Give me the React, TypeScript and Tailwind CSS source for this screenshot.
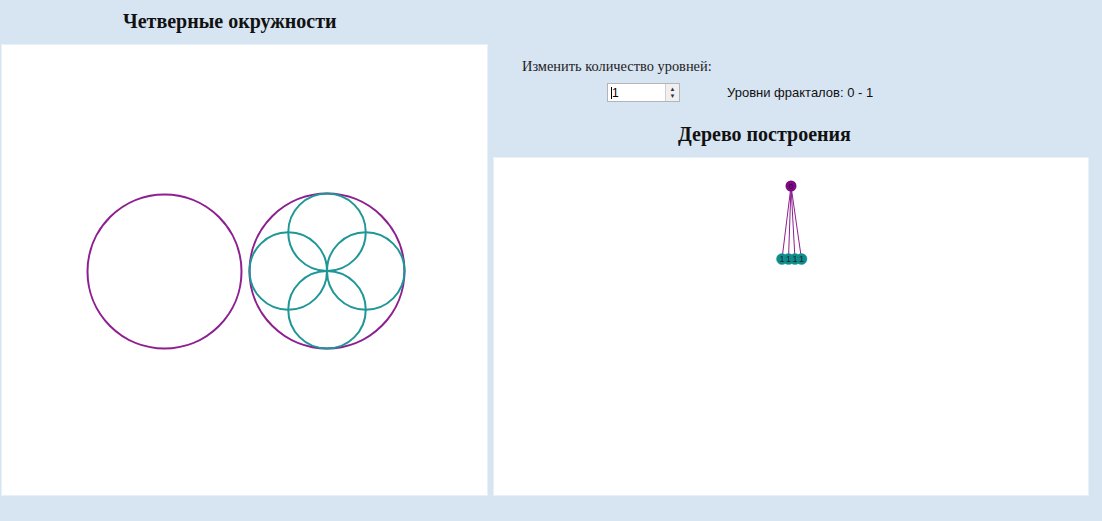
export default function App() {
  const purple = "#8d1f91";
  const teal = "#1f9697";

  // four inner circles of the quad fractal
  const cx = 325;
  const cy = 226;
  const R = 77.5;
  const r = R / 2;
  const inner = [
    [cx, cy - r],
    [cx, cy + r],
    [cx - r, cy],
    [cx + r, cy],
  ];

  const children = [288, 294.5, 301, 307.5];

  return (
    <div className="w-[1102px] h-[521px] bg-[#d7e4f2] flex pl-[1px] gap-[5px] overflow-hidden">
      {/* LEFT COLUMN */}
      <div className="w-[487px] flex flex-col">
        <div className="h-[44px] pl-[122px] pt-[8px] font-['Liberation_Serif',serif] font-bold text-[20px] leading-[26px] text-[#111]">
          Четверные окружности
        </div>
        <div className="h-[452px] bg-white border border-[#e8f0f9]">
          <svg width="485" height="450" viewBox="0 0 485 450">
            <circle cx={162.5} cy={226.5} r={77} fill="none" stroke={purple} strokeWidth={2} />
            <circle cx={cx} cy={cy} r={R} fill="none" stroke={purple} strokeWidth={2} />
            {inner.map(([x, y], i) => (
              <circle key={i} cx={x} cy={y} r={r} fill="none" stroke={teal} strokeWidth={2} />
            ))}
          </svg>
        </div>
      </div>

      {/* RIGHT COLUMN */}
      <div className="w-[596px] flex flex-col">
        <div className="h-[113px] pt-[57px] pl-[29px] font-['Liberation_Serif',serif] text-[14.4px] leading-[18px] text-[#222]">
          Изменить количество уровней:
          <div className="flex items-center mt-[8px]">
            <div className="ml-[85px] w-[73px] h-[19px] border border-[#b5b5b5] bg-white flex items-center">
              <span className="ml-[3px] h-[12px] border-l border-black"></span>
              <span className="font-['Liberation_Sans',sans-serif] text-[12px] leading-[14px] text-black">1</span>
              <div className="ml-auto w-[14px] h-full border-l border-[#d0d0d0] bg-[#f0f0f0] flex flex-col items-center justify-center text-[6px] leading-[7px] text-[#333]">
                <span>▲</span>
                <span>▼</span>
              </div>
            </div>
            <span className="ml-[47px] font-['Liberation_Sans',sans-serif] text-[13px] leading-[16px] text-[#111]">
              Уровни фракталов: 0 - 1
            </span>
          </div>
        </div>
        <div className="h-[44px] pl-[185px] pt-[8px] font-['Liberation_Serif',serif] font-bold text-[20px] leading-[26px] text-[#111]">
          Дерево построения
        </div>
        <div className="h-[339px] bg-white border border-[#e8f0f9]">
          <svg width="594" height="337" viewBox="0 0 594 337">
            {children.map((x, i) => (
              <line key={i} x1={297} y1={28} x2={x} y2={101} stroke={purple} strokeWidth={1} />
            ))}
            {children.map((x, i) => (
              <circle key={i} cx={x} cy={101} r={5.5} fill="#108a8a" stroke="#17a0a0" strokeWidth={0.5} />
            ))}
            {children.map((x, i) => (
              <text
                key={i}
                x={x}
                y={104}
                textAnchor="middle"
                fontSize={9}
                fontFamily="Liberation Sans, sans-serif"
                fill="#0a2a2a"
              >
                1
              </text>
            ))}
            <circle cx={297} cy={28} r={5.5} fill="#7d0a82" />
            <text x={297} y={31} textAnchor="middle" fontSize={8} fontFamily="Liberation Sans, sans-serif" fill="#2a0030">
              0
            </text>
          </svg>
        </div>
      </div>
    </div>
  );
}
